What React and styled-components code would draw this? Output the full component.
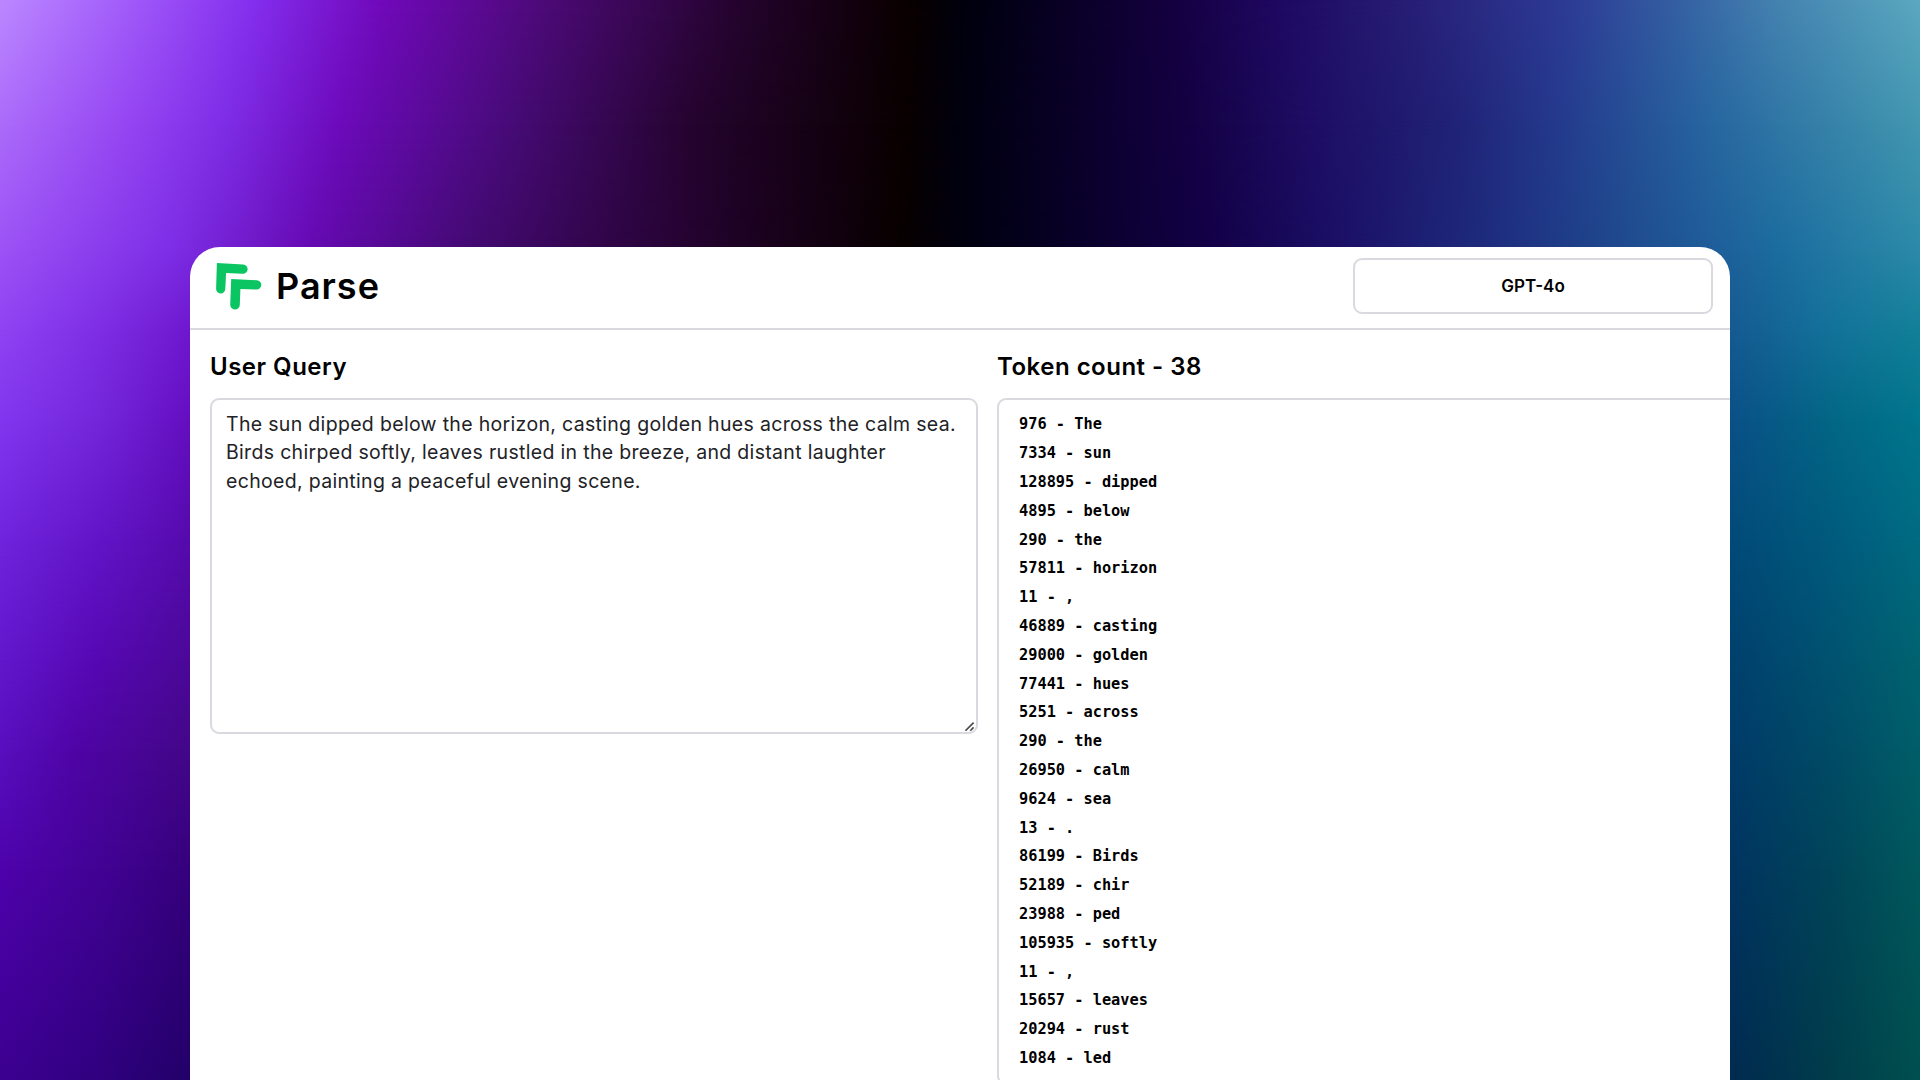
import React from "react";
import styled, { createGlobalStyle } from "styled-components";

const GlobalStyle = createGlobalStyle`
  *, *::before, *::after { box-sizing: border-box; }
  body { margin: 0; overflow: hidden; }
`;

const sans = `Inter, "Open Sans", sans-serif`;
const mono = `"DejaVu Sans Mono", "Liberation Mono", monospace`;
const line = "#d9d9df";

/* Backdrop: horizontal colour bands, each fading in from the band above it. */
const bands = [
  {
    y: 0,
    stops:
      "#bb88ff 0, #a562fb 110px, #842eee 255px, #7109bb 380px, #4b0a75 551px, #25042f 735px, #0a0000 906px, #00000e 967px, #13003d 1163px, #1e0860 1273px, #282078 1420px, #2d3b95 1567px, #3560a3 1678px, #4482b0 1776px, #5ba8c0 1920px",
  },
  {
    y: 125,
    stops:
      "#ab6bfa 0, #9647f2 122px, #7e2de6 225px, #6c0abb 340px, #470b78 508px, #25042f 690px, #090000 904px, #00000f 962px, #130041 1180px, #1e0d64 1310px, #202377 1457px, #24398c 1555px, #2767a0 1714px, #4297b0 1920px",
  },
  {
    y: 250,
    stops:
      "#9c52f5 0, #7d2ee6 172px, #650ab2 310px, #440a74 465px, #2f0546 612px, #1e0225 735px, #080000 900px, #000010 967px, #130048 1212px, #1b1168 1347px, #1e3080 1506px, #1f5e99 1714px, #1b6c9f 1776px, #2c8aa8 1920px",
  },
  { y: 330, stops: "#8f43f2 0, #7f30e7 90px, #6e18ce 190px, #155a92 1730px, #13739a 1835px, #128098 1920px" },
  { y: 420, stops: "#8236ee 0, #7326da 100px, #640ec0 190px, #0a5087 1730px, #036685 1830px, #00768c 1920px" },
  { y: 540, stops: "#7024dc 0, #6215c8 95px, #550aac 190px, #024a78 1730px, #005a7d 1830px, #006b82 1920px" },
  { y: 660, stops: "#6217cd 0, #5608b3 95px, #4b0898 190px, #00406d 1730px, #005270 1830px, #00636f 1920px" },
  { y: 750, stops: "#580fbe 0, #4f04a6 75px, #430788 190px, #003b68 1730px, #004b66 1830px, #005e68 1920px" },
  { y: 870, stops: "#4e02ab 0, #420395 95px, #35007c 190px, #003460 1730px, #004459 1830px, #00585c 1920px" },
  { y: 1080, stops: "#3c0090 0, #300080 95px, #220068 190px, #002a50 1730px, #003c4a 1830px, #004f4e 1920px" },
];

const Page = styled.div`
  position: relative;
  width: 1920px;
  height: 1080px;
  overflow: hidden;
  display: flex;
  justify-content: center;
  padding-top: 247px;
  font-family: ${sans};
  color: #000;
`;

const Band = styled.div`
  position: absolute;
  inset: 0;
  background: linear-gradient(to right, ${(p) => p.$stops});
  mask-image: ${(p) =>
    p.$y === 0 ? "none" : `linear-gradient(to bottom, transparent ${p.$from}px, #000 ${p.$y}px)`};
`;

const Card = styled.main`
  position: relative;
  width: 1540px;
  height: 833px;
  overflow: hidden;
  background: #fff;
  border-radius: 30px 30px 0 0;
`;

const Header = styled.header`
  display: flex;
  align-items: center;
  justify-content: space-between;
  height: 83px;
  padding: 0 17px 3px 26px;
  border-bottom: 2px solid ${line};
`;

const Brand = styled.div`
  display: flex;
  align-items: center;
  gap: 14px;
`;

const Logo = styled.svg`
  width: 46px;
  height: 48px;
`;

const BrandName = styled.h1`
  margin: 0;
  font-size: 36px;
  line-height: 44px;
  font-weight: 600;
  letter-spacing: 1px;
`;

const ModelButton = styled.button`
  width: 360px;
  height: 56px;
  border: 2px solid ${line};
  border-radius: 9px;
  background: #fff;
  color: #000;
  font: 600 17px/24px ${sans};
`;

const Columns = styled.div`
  display: grid;
  grid-template-columns: 768px 768px;
  column-gap: 19px;
  padding: 19px 0 0 20px;
`;

const Column = styled.section`
  display: flex;
  flex-direction: column;
`;

const Heading = styled.h2`
  margin: 0 0 13px;
  font-size: 24px;
  line-height: 36px;
  font-weight: 600;
  letter-spacing: 0.5px;
`;

const QueryField = styled.div`
  position: relative;
  display: flex;
`;

const Query = styled.textarea`
  width: 768px;
  height: 336px;
  margin: 0;
  padding: 9.5px 14px;
  border: 2px solid ${line};
  border-radius: 9px;
  outline: none;
  resize: none;
  overflow: hidden;
  background: #fff;
  color: #222226;
  font: 400 19.5px/28.8px ${sans};
  letter-spacing: 0.32px;
`;

const Grip = styled.svg`
  position: absolute;
  right: 3px;
  bottom: 2px;
  width: 10px;
  height: 10px;
`;

const TokenList = styled.ol`
  list-style: none;
  margin: 0;
  padding: 10.4px 19px 10px 20px;
  border: 2px solid ${line};
  border-radius: 9px;
`;

const Token = styled.li`
  height: 28.8px;
  font: 700 15.3px/28.8px ${mono};
  white-space: pre;
`;

const tokens = [
  [976, "The"], [7334, "sun"], [128895, "dipped"], [4895, "below"], [290, "the"],
  [57811, "horizon"], [11, ","], [46889, "casting"], [29000, "golden"], [77441, "hues"],
  [5251, "across"], [290, "the"], [26950, "calm"], [9624, "sea"], [13, "."],
  [86199, "Birds"], [52189, "chir"], [23988, "ped"], [105935, "softly"], [11, ","],
  [15657, "leaves"], [20294, "rust"], [1084, "led"],
];

const query = [
  "The sun dipped below the horizon, casting golden hues across the calm sea.",
  "Birds chirped softly, leaves rustled in the breeze, and distant laughter",
  "echoed, painting a peaceful evening scene.",
].join("\n");

export default function App() {
  return (
    <Page>
      <GlobalStyle />
      {bands.map((b, i) => (
        <Band key={b.y} $y={b.y} $from={i ? bands[i - 1].y : 0} $stops={b.stops} />
      ))}
      <Card>
        <Header>
          <Brand>
            <Logo viewBox="0 0 46 48" fill="#0bc563" aria-hidden="true">
              <path d="M.9 1 L27.2 2.5 A4.6 4.6 0 0 1 26.7 11.8 L10.1 11 L9.3 27 A4.5 4.5 0 0 1 .1 26.6 Z" />
              <path d="M15.2 17 L40.8 18.2 A4.7 4.7 0 0 1 40.4 27.6 L24.4 26.9 L23.8 43 A4.6 4.6 0 0 1 14.2 42.6 Z" />
            </Logo>
            <BrandName>Parse</BrandName>
          </Brand>
          <ModelButton type="button">GPT-4o</ModelButton>
        </Header>
        <Columns>
          <Column>
            <Heading>User Query</Heading>
            <QueryField>
              <Query defaultValue={query} spellCheck={false} />
              <Grip viewBox="0 0 10 10" fill="none" stroke="#4a4a4a" strokeWidth="1.6" aria-hidden="true">
                <path d="M.5 8.7 8.6 .6M5.3 8.7 8.6 5.4" />
              </Grip>
            </QueryField>
          </Column>
          <Column>
            <Heading>Token count - 38</Heading>
            <TokenList>
              {tokens.map(([id, word], i) => (
                <Token key={i}>{`${id} - ${word}`}</Token>
              ))}
            </TokenList>
          </Column>
        </Columns>
      </Card>
    </Page>
  );
}
